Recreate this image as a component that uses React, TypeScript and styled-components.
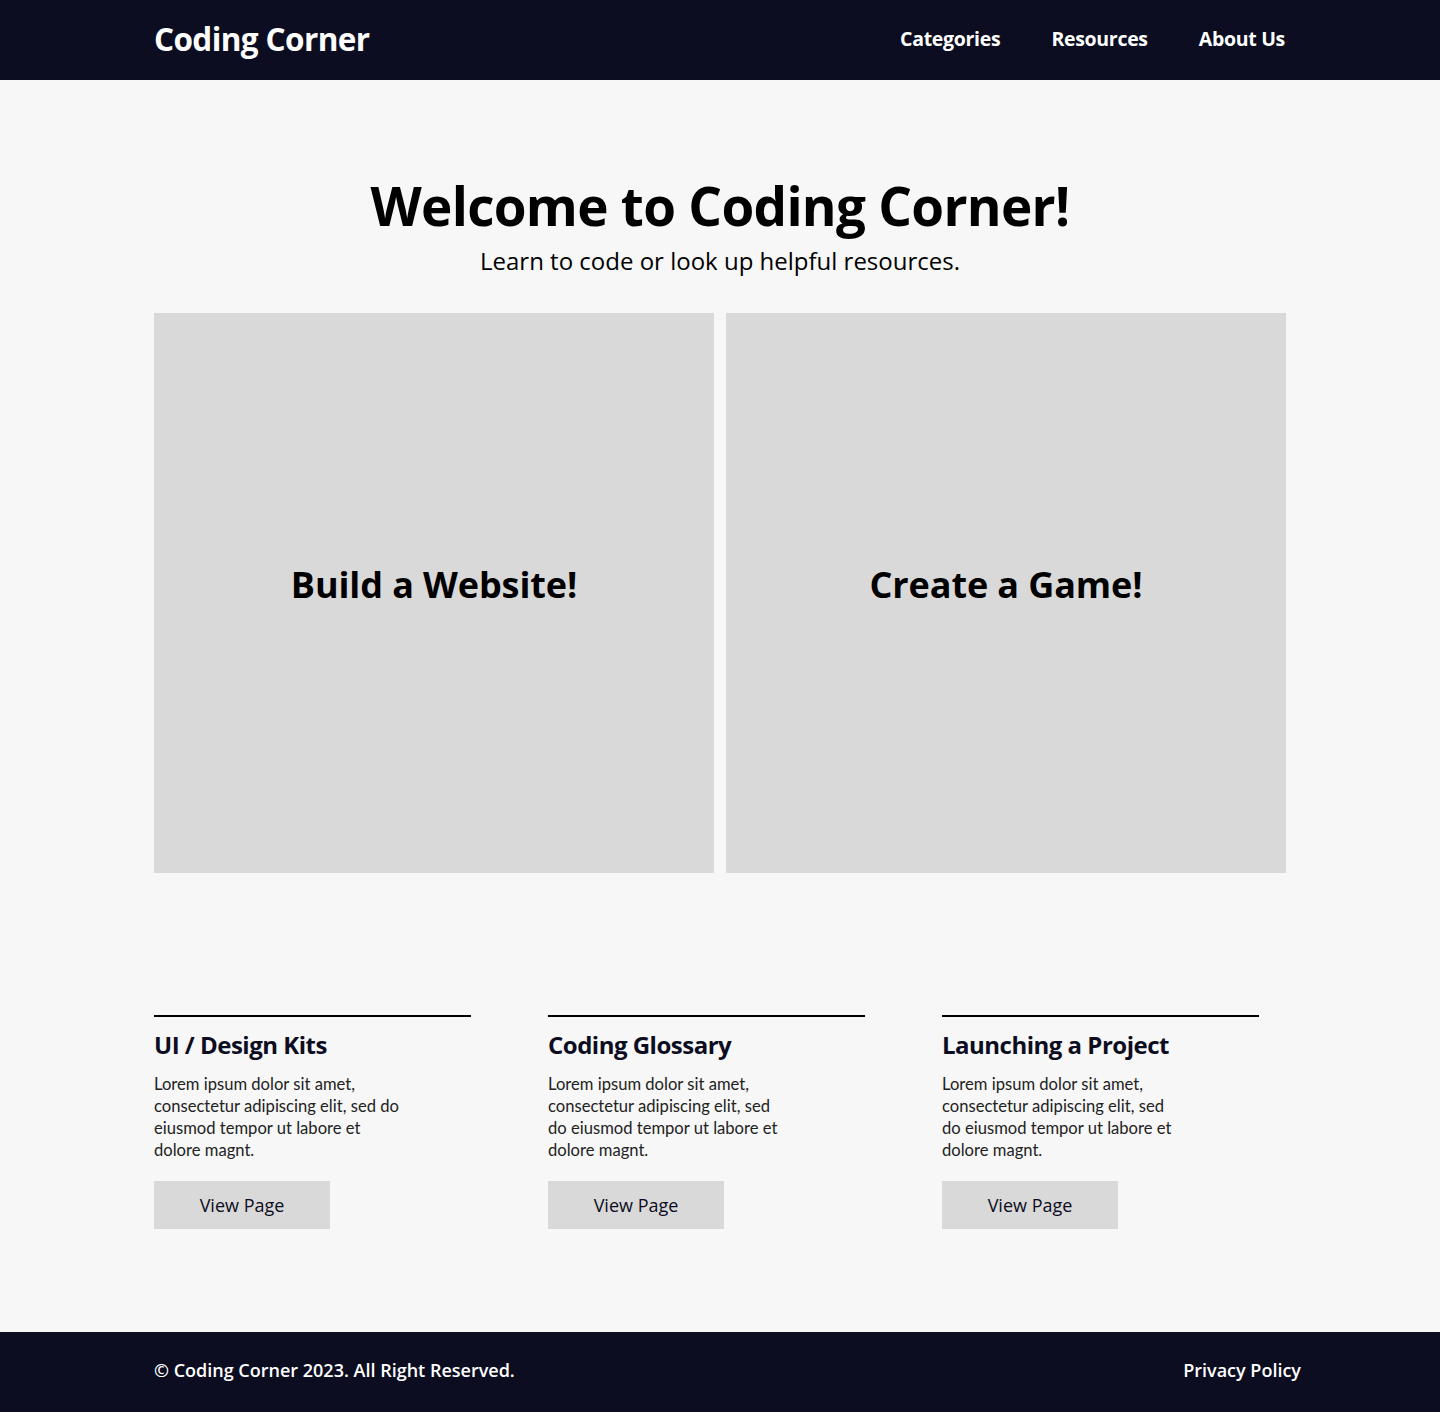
import React from "react";
import styled, { createGlobalStyle } from "styled-components";

const Global = createGlobalStyle`
  * { box-sizing: border-box; }
  body { margin: 0; background: #f7f7f7; font-family: "Open Sans", sans-serif; }
`;

const Header = styled.header`
  height: 80px;
  background: #0c0d21;
  display: flex;
  align-items: center;
  justify-content: space-between;
  padding: 0 155px 4px 154px;
`;

const Logo = styled.div`
  color: #fff;
  font-family: "Open Sans", sans-serif;
  font-weight: 700;
  font-size: 31.5px;
  letter-spacing: -0.6px;
`;

const Nav = styled.nav`
  display: flex;
  gap: 51px;
`;

const NavLink = styled.a`
  color: #fff;
  font-weight: 700;
  font-size: 19.5px;
  letter-spacing: -0.3px;
  text-decoration: none;
`;

const Main = styled.main`
  width: 1132px;
  margin: 0 auto;
`;

const Hero = styled.section`
  padding-top: 95px;
  text-align: center;
`;

const Title = styled.h1`
  margin: 0;
  font-size: 53px;
  line-height: 62px;
  font-weight: 700;
  letter-spacing: -0.7px;
  color: #000;
`;

const Subtitle = styled.p`
  margin: 7px 0 0;
  font-size: 24px;
  line-height: 34px;
  color: #000;
`;

const Tiles = styled.div`
  display: grid;
  grid-template-columns: 560px 560px;
  gap: 12px;
  margin-top: 35px;
`;

const Tile = styled.div`
  height: 560px;
  background: #d9d9d9;
  display: flex;
  align-items: center;
  justify-content: center;
  font-size: 36px;
  font-weight: 700;
  letter-spacing: -0.1px;
  color: #000;
  padding-bottom: 18px;
`;

const Features = styled.div`
  display: grid;
  grid-template-columns: repeat(3, 317px);
  column-gap: 77px;
  margin-top: 142px;
  padding-bottom: 103px;
`;

const Feature = styled.div`
  border-top: 2px solid #000;
  padding-top: 12px;
`;

const FeatureTitle = styled.h3`
  margin: 0;
  font-size: 24px;
  line-height: 32px;
  font-weight: 700;
  letter-spacing: -0.5px;
  color: #0c0d21;
`;

const FeatureText = styled.p`
  margin: 12px 0 0;
  font-family: Lato, sans-serif;
  font-size: 16.6px;
  line-height: 22px;
  color: #222;
  white-space: nowrap;
`;

const Button = styled.button`
  margin-top: 20px;
  width: 176px;
  height: 48px;
  border: none;
  background: #d9d9d9;
  font-family: "Open Sans", sans-serif;
  font-size: 18px;
  color: #0c0d21;
  cursor: pointer;
  padding-bottom: 2px;
`;

const Footer = styled.footer`
  height: 80px;
  background: #0c0d21;
  display: flex;
  align-items: center;
  justify-content: space-between;
  padding: 0 139px 4px 154px;
  color: #fff;
  font-size: 18px;
  font-weight: 600;
`;

const features = [
  {
    title: "UI / Design Kits",
    lines: ["Lorem ipsum dolor sit amet,", "consectetur adipiscing elit, sed do", "eiusmod tempor ut labore et", "dolore magnt."],
  },
  {
    title: "Coding Glossary",
    lines: ["Lorem ipsum dolor sit amet,", "consectetur adipiscing elit, sed", "do eiusmod tempor ut labore et", "dolore magnt."],
  },
  {
    title: "Launching a Project",
    lines: ["Lorem ipsum dolor sit amet,", "consectetur adipiscing elit, sed", "do eiusmod tempor ut labore et", "dolore magnt."],
  },
];

export default function App() {
  return (
    <>
      <Global />
      <Header>
        <Logo>Coding Corner</Logo>
        <Nav>
          <NavLink href="#">Categories</NavLink>
          <NavLink href="#">Resources</NavLink>
          <NavLink href="#">About Us</NavLink>
        </Nav>
      </Header>
      <Main>
        <Hero>
          <Title>Welcome to Coding Corner!</Title>
          <Subtitle>Learn to code or look up helpful resources.</Subtitle>
        </Hero>
        <Tiles>
          <Tile>Build a Website!</Tile>
          <Tile>Create a Game!</Tile>
        </Tiles>
        <Features>
          {features.map((f) => (
            <Feature key={f.title}>
              <FeatureTitle>{f.title}</FeatureTitle>
              <FeatureText>
                {f.lines.map((l, i) => (
                  <React.Fragment key={i}>
                    {l}
                    {i < f.lines.length - 1 && <br />}
                  </React.Fragment>
                ))}
              </FeatureText>
              <Button>View Page</Button>
            </Feature>
          ))}
        </Features>
      </Main>
      <Footer>
        <span>© Coding Corner 2023. All Right Reserved.</span>
        <span>Privacy Policy</span>
      </Footer>
    </>
  );
}
